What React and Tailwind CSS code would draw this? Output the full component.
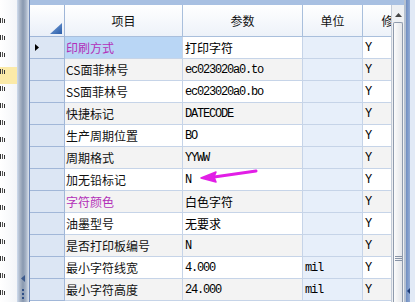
import React from "react";

const ROWS = [
  { name: "印刷方式", value: "打印字符", unit: "", flag: "Y", purple: true },
  { name: "CS面菲林号", value: "ec023020a0.to", unit: "", flag: "Y" },
  { name: "SS面菲林号", value: "ec023020a0.bo", unit: "", flag: "Y" },
  { name: "快捷标记", value: "DATECODE", unit: "", flag: "Y" },
  { name: "生产周期位置", value: "BO", unit: "", flag: "Y" },
  { name: "周期格式", value: "YYWW", unit: "", flag: "Y" },
  { name: "加无铅标记", value: "N", unit: "", flag: "Y" },
  { name: "字符颜色", value: "白色字符", unit: "", flag: "Y", purple: true },
  { name: "油墨型号", value: "无要求", unit: "", flag: "Y" },
  { name: "是否打印板编号", value: "N", unit: "", flag: "Y" },
  { name: "最小字符线宽", value: "4.000", unit: "mil", flag: "Y" },
  { name: "最小字符高度", value: "24.000", unit: "mil", flag: "Y" },
];

const isCjk = (s) => /[\u4e00-\u9fff]/.test(s);
const MONO = "font-['Liberation_Mono',monospace] text-[12px] tracking-[-1.2px]";
const CJK = "font-['Noto_Sans_CJK_SC',sans-serif] text-[12px]";

export default function App() {
  return (
    <div className="relative flex w-[415px] h-[302px] overflow-hidden bg-white text-black font-['Noto_Sans_CJK_SC',sans-serif] text-[12px] leading-none">
      {/* left panel (clipped neighbour, only glyph edges show) */}
      <div className="w-[17px] shrink-0 flex flex-col overflow-hidden bg-[linear-gradient(to_right,#ffffff,#f3f5f8)] pt-[16px]">
        {Array.from({ length: 17 }).map((_, i) => (
          <div key={i} className={`h-[17px] shrink-0 flex items-start pt-[2px] ${i === 3 ? "bg-[#fbeaa8]" : ""}`}>
            <div className="flex gap-[1px]">
              <div className="w-[1px] h-[5px] bg-[#333]" />
              <div className="w-[1px] h-[5px] bg-[#555]" />
              <div className="w-[1px] h-[4px] mt-[1px] bg-[#333]" />
            </div>
          </div>
        ))}
      </div>

      {/* left splitter */}
      <div className="w-[13px] shrink-0 flex flex-col justify-end items-center pb-[3px] border-r border-[#6d88b8] bg-[linear-gradient(to_right,#cfdcee,#a9b5c6,#8999b0,#a7b4c7,#dbe3ee)]">
        <svg width="4" height="7" viewBox="0 0 4 7" className="mb-[7px]">
          <polygon points="4,0 0,3.5 4,7" fill="#3d5a8c" />
        </svg>
        <div className="flex flex-col gap-[2px]">
          <div className="w-[2px] h-[2px] bg-[#2f4f86]" />
          <div className="w-[2px] h-[2px] bg-[#2f4f86]" />
          <div className="w-[2px] h-[2px] bg-[#2f4f86]" />
        </div>
      </div>

      {/* grid + scrollbar */}
      <div className="w-[374px] shrink-0 flex flex-col">
        <div className="h-[5px] shrink-0 bg-[#a8c0e2]" />
        <div className="flex flex-1 min-h-0">
          <div className="w-[361px] shrink-0 overflow-hidden">
            {/* header */}
            <div className="flex h-[32px]">
              <div className="w-[35px] shrink-0 flex items-end justify-end pr-[2px] pb-[2px] border-r border-b border-[#9fb6d8] bg-[linear-gradient(to_bottom,#ffffff,#e9eff8)]">
                <svg width="12" height="11" viewBox="0 0 12 11">
                  <defs>
                    <linearGradient id="tri" x1="0" y1="0" x2="1" y2="1">
                      <stop offset="0" stopColor="#7ea6dc" />
                      <stop offset="1" stopColor="#2a5ca8" />
                    </linearGradient>
                  </defs>
                  <polygon points="12,0 12,11 0,11" fill="url(#tri)" />
                </svg>
              </div>
              {[
                ["项目", "w-[118px]"],
                ["参数", "w-[120px]"],
                ["单位", "w-[60px]"],
                ["修改", "w-[62px]"],
              ].map(([t, w]) => (
                <div key={t} className={`${w} shrink-0 flex items-center justify-center border-r border-b border-[#a9bfdc] bg-[linear-gradient(to_bottom,#ffffff,#edf2f9)] text-[#111]`}>
                  {t}
                </div>
              ))}
            </div>

            {/* rows */}
            {ROWS.map((r, i) => {
              const alt = i % 2 === 1 ? "bg-[#f3f3f3]" : "bg-white";
              return (
                <div key={r.name} className="flex h-[22px]">
                  <div className="w-[35px] shrink-0 flex items-center pl-[5px] border-r border-b border-[#a1b7d8] bg-[#dce6f4]">
                    {i === 0 && (
                      <svg width="4" height="7" viewBox="0 0 4 7">
                        <polygon points="0,0 4,3.5 0,7" fill="#000" />
                      </svg>
                    )}
                  </div>
                  <div className={`w-[118px] shrink-0 flex items-center pl-[1px] border-r border-b border-[#c6d4e8] ${i === 0 ? "bg-[#b9d6f5]" : alt} ${r.purple ? "text-[#b22fb8]" : "text-[#111]"}`}>
                    {r.name}
                  </div>
                  <div className={`w-[120px] shrink-0 flex items-center pl-[2px] border-r border-b border-[#c6d4e8] ${alt} ${isCjk(r.value) ? CJK : MONO}`}>
                    {r.value}
                  </div>
                  <div className={`w-[60px] shrink-0 flex items-center pl-[2px] border-r border-b border-[#c6d4e8] bg-[#e7effa] ${MONO}`}>
                    {r.unit}
                  </div>
                  <div className={`w-[62px] shrink-0 flex items-center pl-[2px] border-r border-b border-[#c6d4e8] ${alt} ${MONO}`}>
                    {r.flag}
                  </div>
                </div>
              );
            })}
          </div>

          {/* vertical scrollbar */}
          <div className="w-[13px] shrink-0 flex flex-col border-l border-[#c3cbd7] bg-[#eef0f3]">
            <div className="h-[17px] shrink-0 flex items-center justify-center pt-[2px]">
              <svg width="7" height="4" viewBox="0 0 7 4">
                <polygon points="0,4 3.5,0 7,4" fill="#444" />
              </svg>
            </div>
            <div className="flex-1 mx-[1px] rounded-t-[2px] border border-b-0 border-[#8f9bad] bg-[linear-gradient(to_right,#fbfbfb,#e4e6ea)] flex flex-col items-center pt-[233px] gap-[1px]">
              <div className="w-[7px] h-[1px] bg-[#8793a6]" />
              <div className="w-[7px] h-[1px] bg-[#8793a6]" />
              <div className="w-[7px] h-[1px] bg-[#8793a6]" />
            </div>
          </div>
        </div>
      </div>

      {/* right splitter */}
      <div className="w-[11px] shrink-0 flex">
        <div className="w-[2px] bg-[#b6c1d0]" />
        <div className="w-[4px] flex flex-col justify-end items-center pb-[8px] bg-[linear-gradient(to_right,#6f8dc1,#93acd5)]">
          <svg width="3" height="6" viewBox="0 0 3 6">
            <polygon points="3,0 0,3 3,6" fill="#1f3f7a" />
          </svg>
        </div>
        <div className="w-[5px] bg-[#e2eaf6]" />
      </div>

      {/* annotation arrow */}
      <svg className="absolute left-0 top-0 pointer-events-none" width="415" height="302" viewBox="0 0 415 302">
        <path d="M214 177 C 228 175, 242 173, 256 171" stroke="#e21ee6" strokeWidth="3" strokeLinecap="round" fill="none" />
        <path d="M201 178 L 216 172 L 214 177 L 216 182 Z" fill="#e21ee6" stroke="#e21ee6" strokeWidth="1.5" strokeLinejoin="round" />
      </svg>
    </div>
  );
}
